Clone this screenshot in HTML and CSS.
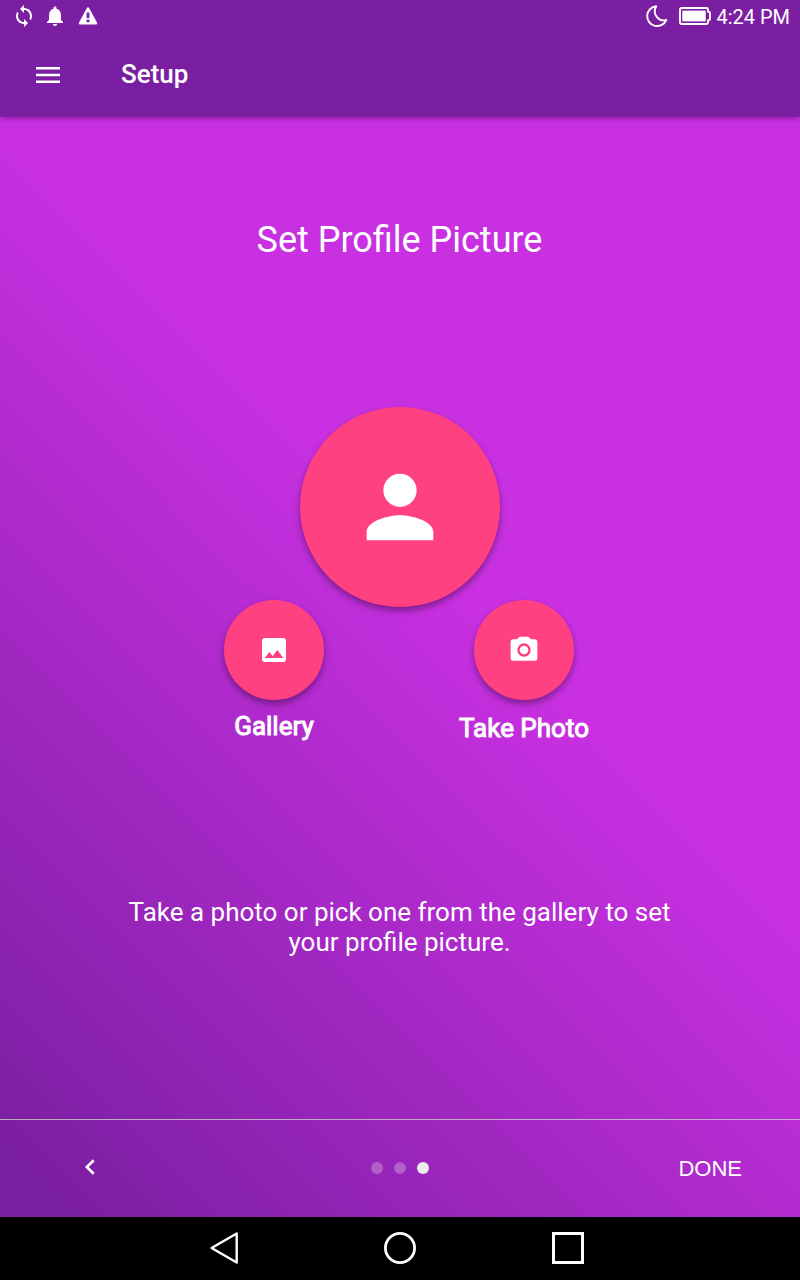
FILE: index.html
```html
<!DOCTYPE html>
<html lang="en">
<head>
<meta charset="utf-8">
<title>Setup</title>
<link rel="stylesheet" href="styles.css">
</head>
<body>
<div class="screen">
  <header class="top">
    <div class="status">
      <svg class="ic sync" width="24" height="24" viewBox="0 0 24 24"><path fill="#fff" d="M12 4V1L8 5l4 4V6c3.31 0 6 2.69 6 6 0 1.010-.25 1.970-.7 2.800l1.460 1.460C19.540 15.030 20 13.570 20 12c0-4.420-3.580-8-8-8zm0 14c-3.310 0-6-2.690-6-6 0-1.010.25-1.970.7-2.800L5.240 7.740C4.460 8.970 4 10.430 4 12c0 4.420 3.580 8 8 8v3l4-4-4-4v3z"/></svg>
      <svg class="ic bell" width="24" height="24" viewBox="0 0 24 24"><path fill="#fff" d="M12 22c1.100 0 2-.9 2-2h-4c0 1.100.89 2 2 2zm6-6v-5c0-3.070-1.640-5.640-4.500-6.320V4c0-.83-.67-1.500-1.500-1.500s-1.500.67-1.500 1.500v.68C7.630 5.360 6 7.920 6 11v5l-2 2v1h16v-1l-2-2z"/></svg>
      <svg class="ic warn" width="20" height="20" viewBox="0 0 20 20"><path fill="#fff" fill-rule="evenodd" d="M10 1.200q.7 0 1.100.8l8 14.800q.6 1.600-.9 1.700H1.800q-1.500-.1-.9-1.700l8-14.800q.4-.8 1.100-.8zM8.600 6.500v5.500h2.800V6.500zM8.600 13.600v2.600h2.800v-2.600z"/></svg>
      <span class="grow"></span>
      <svg class="moon" width="24" height="24" viewBox="0 0 24 24"><path fill="none" stroke="#fff" stroke-width="1.900" stroke-linejoin="round" d="M11.200 2.300A9.900 9.900 0 1 0 21.300 15.800C14.500 18.300 6.500 10.500 11.200 2.300z"/></svg>
      <svg class="battery" width="32" height="18" viewBox="0 0 32 18"><path fill="none" stroke="#fff" stroke-width="1.900" stroke-linejoin="round" d="M2.500 1h25q1.500 0 1.500 1.500v2.300h.8q1.200 0 1.200 1.200v6q0 1.200-1.200 1.200H29v2.300q0 1.500-1.500 1.500h-25Q1 17 1 15.500v-13Q1 1 2.500 1z"/><path fill="#fff" d="M3.300 3.600h23.400v10.800H3.300z"/></svg>
      <span class="time">4:24 PM</span>
    </div>
    <div class="bar">
      <svg width="24" height="16" viewBox="0 0 24 16"><path fill="#fff" d="M0 0h24v2.600H0zM0 6.700h24v2.600H0zM0 13.400h24V16H0z"/></svg>
      <h1 class="title">Setup</h1>
    </div>
  </header>
  <main class="content">
    <h2 class="heading">Set Profile Picture</h2>
    <div class="disc big">
      <svg width="100" height="100" viewBox="0 0 24 24"><path fill="#fff" d="M12 12c2.210 0 4-1.790 4-4s-1.790-4-4-4-4 1.790-4 4 1.790 4 4 4zm0 2c-2.670 0-8 1.340-8 4v2h16v-2c0-2.660-5.330-4-8-4z"/></svg>
    </div>
    <div class="actions">
      <div class="action">
        <div class="disc small"><svg width="32" height="32" viewBox="0 0 24 24"><path fill="#fff" d="M21 19V5c0-1.100-.9-2-2-2H5c-1.100 0-2 .9-2 2v14c0 1.100.9 2 2 2h14c1.100 0 2-.9 2-2zM8.500 13.500l2.500 3.010L14.500 12l4.500 6H5l3.500-4.500z"/></svg></div>
        <span class="label">Gallery</span>
      </div>
      <div class="action">
        <div class="disc small"><svg width="32" height="32" viewBox="0 0 32 32"><path fill="#fff" fill-rule="evenodd" d="M11.500 2.700h9l2.500 2.500h4q2.400.2 2.400 2.800v16q0 2.700-2.400 2.700H5q-2.400 0-2.400-2.700V8q0-2.600 2.400-2.800h4zM16 9.300a6.700 6.700 0 1 0 0 13.400 6.700 6.700 0 1 0 0-13.400z"/><circle cx="16" cy="16" r="4.300" fill="#fff"/></svg></div>
        <span class="label photo">Take Photo</span>
      </div>
    </div>
    <p class="hint">Take a photo or pick one from the gallery to set<br>your profile picture.</p>
  </main>
  <footer class="pager">
    <div class="side"><svg width="10" height="16" viewBox="0 0 10 16"><path fill="none" stroke="#fff" stroke-width="2.700" d="M8.700 1.200L1.800 8l6.900 6.800"/></svg></div>
    <div class="dots"><i class="dot"></i><i class="dot"></i><i class="dot on"></i></div>
    <div class="side end">DONE</div>
  </footer>
  <nav class="nav">
    <svg width="32" height="32" viewBox="0 0 32 32"><path fill="none" stroke="#fff" stroke-width="2.400" stroke-linejoin="round" d="M28.700 1.500v29L3.600 16z"/></svg>
    <svg width="32" height="32" viewBox="0 0 32 32"><circle cx="16" cy="16" r="14.600" fill="none" stroke="#fff" stroke-width="2.800"/></svg>
    <svg width="32" height="32" viewBox="0 0 32 32"><path fill="none" stroke="#fff" stroke-width="3" d="M1.500 1.500h29v29h-29z"/></svg>
  </nav>
</div>
</body>
</html>
```
FILE: styles.css
```css
* { box-sizing: border-box; margin: 0; padding: 0; }
body { font-family: Roboto, sans-serif; color: #fff; }
svg { display: block; flex: none; }
.screen {
  width: 800px; height: 1280px; overflow: hidden;
  display: flex; flex-direction: column;
  background: linear-gradient(45deg, #7b1fa2 4%, #c930e2 57.4%) 0 117px / 800px 1100px no-repeat;
}
.top { height: 117px; background: #7b1fa2; box-shadow: 0 1px 5px rgba(0,0,0,.4); }
.status { height: 32px; display: flex; align-items: center; padding: 0 10px 0 12px; }
.sync { margin-right: 7px; }
.bell { margin-right: 11px; }
.grow { flex: 1; }
.moon { margin-right: 10px; }
.battery { margin-right: 5px; }
.time { font-size: 20px; line-height: 32px; white-space: nowrap; padding-top: 2px; }
.bar { height: 86px; display: flex; align-items: center; padding-left: 36px; gap: 61px; }
.title { font-size: 26px; font-weight: 500; line-height: 30px; padding-bottom: 2px; }
.content { height: 1002px; display: flex; flex-direction: column; align-items: center; padding-top: 102px; }
.heading { font-size: 36px; font-weight: 400; line-height: 42px; margin-bottom: 146px; padding-right: 1px; }
.disc { border-radius: 50%; background: #ff4081; display: flex; align-items: center; justify-content: center; box-shadow: 0 4px 7px rgba(0,0,0,.36); }
.big { width: 200px; height: 200px; flex: none; }
.small { width: 100px; height: 100px; }
.actions { display: flex; gap: 50px; margin-top: -7px; width: 452px; }
.action { width: 200px; display: flex; flex-direction: column; align-items: center; }
.label { font-size: 26px; line-height: 30px; font-weight: 400; -webkit-text-stroke: 1px #fff; margin-top: 11px; }
.photo { margin-top: 13px; }
.hint { font-size: 26px; line-height: 30px; text-align: center; margin-top: 154px; padding-right: 1px; white-space: nowrap; }
.pager { height: 98px; border-top: 1px solid rgba(204,204,204,.8); display: flex; align-items: center; justify-content: space-between; padding: 0 58px 1px 85px; }
.side { width: 90px; padding-bottom: 2px; }
.end { width: 117px; text-align: right; font: 22px/26px "Liberation Sans", Arial, sans-serif; padding: 2px 0 0; }
.dots { display: flex; gap: 11px; }
.dot { width: 12px; height: 12px; border-radius: 50%; background: rgba(235,235,235,.3); }
.on { background: #ebebeb; }
.nav { height: 63px; background: #000; display: flex; align-items: center; justify-content: center; gap: 136px; padding-bottom: 1px; }
.nav svg:first-child { margin: 0 8px 0 -8px; }
```
